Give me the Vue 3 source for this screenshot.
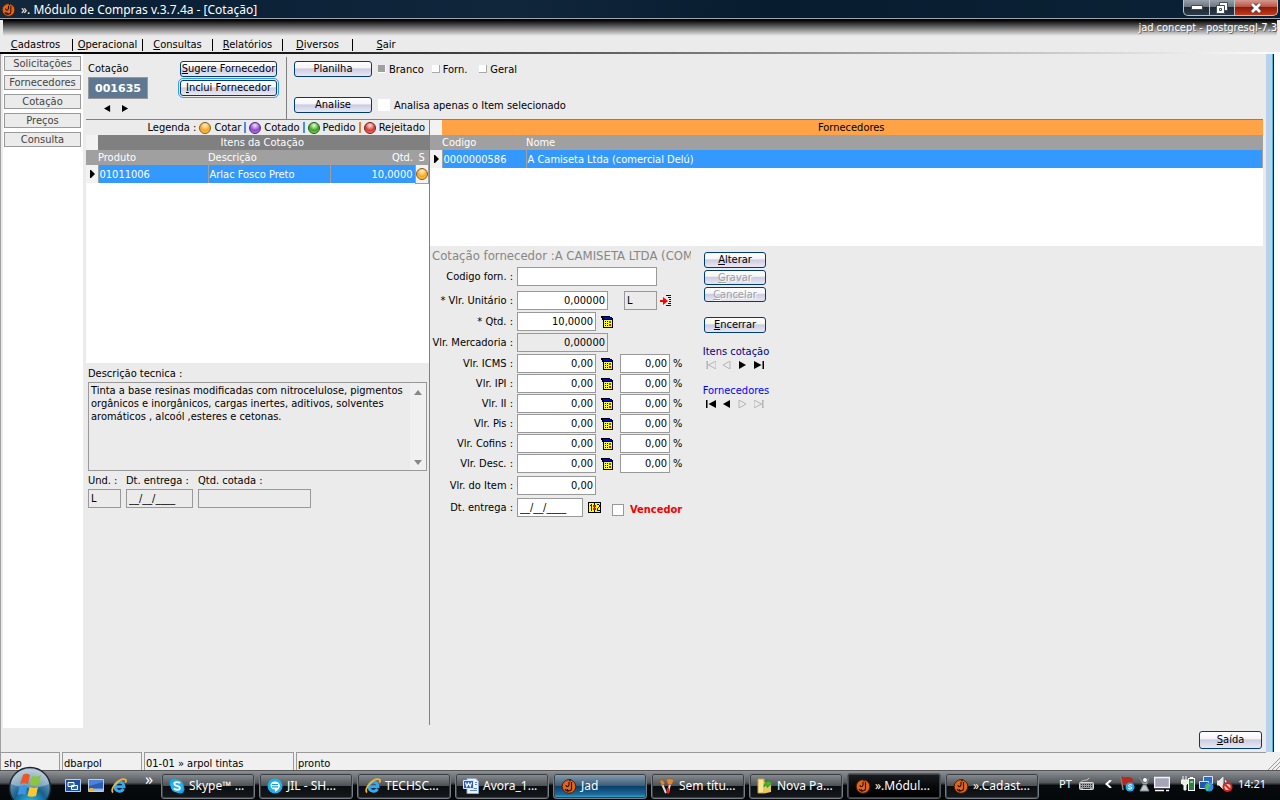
<script setup>
import { ref } from 'vue'

const menus = [
  { text: 'Cadastros', w: 66 },
  { text: 'Operacional', w: 70 },
  { text: 'Consultas', w: 70 },
  { text: 'Relatórios', w: 70 },
  { text: 'Diversos', w: 70 },
  { text: 'Sair', w: 66 }
]
const sections = ['Solicitações', 'Fornecedores', 'Cotação', 'Preços', 'Consulta']
const legend = [
  { text: 'Cotar', ball: 'amber', bar: '' },
  { text: 'Cotado', ball: 'purple', bar: 'blue' },
  { text: 'Pedido', ball: 'green', bar: 'blue' },
  { text: 'Rejeitado', ball: 'red', bar: 'orange' }
]
const taxes = ref([
  { id: 'icms', label: 'Vlr. ICMS :', value: '0,00', pct: '0,00' },
  { id: 'ipi', label: 'Vlr. IPI :', value: '0,00', pct: '0,00' },
  { id: 'ii', label: 'Vlr. II :', value: '0,00', pct: '0,00' },
  { id: 'pis', label: 'Vlr. Pis :', value: '0,00', pct: '0,00' },
  { id: 'cofins', label: 'Vlr. Cofins :', value: '0,00', pct: '0,00' },
  { id: 'desc', label: 'Vlr. Desc. :', value: '0,00', pct: '0,00' }
])
const tasks = [
  { text: 'Skype™ ...', icon: 'skype' },
  { text: 'JIL - SH...', icon: 'chat' },
  { text: 'TECHSC...', icon: 'ie' },
  { text: 'Avora_1...', icon: 'word' },
  { text: 'Jad', icon: 'jad', state: 'flash' },
  { text: 'Sem títu...', icon: 'paint' },
  { text: 'Nova Pa...', icon: 'folder' },
  { text: '».Módul...', icon: 'jad', state: 'active' },
  { text: '».Cadast...', icon: 'jad' }
]
const descricao = ref('Tinta a base resinas modificadas com nitrocelulose, pigmentos orgânicos e inorgânicos, cargas inertes, aditivos, solventes aromáticos , alcoól ,esteres e cetonas.')
const planilha = ref('branco')
const apenasItem = ref(false)
const vencedor = ref(false)
</script>

<template>
  <div class="desktop">
    <svg class="defs" aria-hidden="true">
      <defs>
        <radialGradient id="orb" cx=".5" cy=".9" r=".9">
          <stop offset="0" stop-color="#35c4f0" /><stop offset=".45" stop-color="#15608f" /><stop offset="1" stop-color="#a9bccb" />
        </radialGradient>
        <symbol id="jad" viewBox="0 0 16 16">
          <circle cx="8" cy="8.5" r="6.8" fill="#e0661a" stroke="#4a1c05" />
          <path d="M9 1v2.5M10.5 4v6.5c0 3-4 3-4.5.5M5 7c0 2 2 2.5 3 0V4M4 11c1 2 3 2.5 5 1.5" fill="none" stroke="#2b0f02" stroke-width="1.1" />
        </symbol>
        <symbol id="skype" viewBox="0 0 16 16">
          <circle cx="5" cy="5" r="4.5" fill="#12a5e8" /><circle cx="11" cy="11" r="4.5" fill="#12a5e8" /><circle cx="8" cy="8" r="6.5" fill="#22b0f0" />
          <path d="M11 5.3C10 3.5 5.3 3.700 5.300 5.900c0 2.400 5.600 1.300 5.600 4 0 2.300-4.800 2.500-6 .3" fill="none" stroke="#fff" stroke-width="1.8" />
        </symbol>
        <symbol id="chat" viewBox="0 0 16 16">
          <circle cx="8" cy="8" r="7.5" fill="#1bb0ee" /><path d="M8 3.500c-6 0-6 8 0 8v2.500c7-3.500 6-10.500 0-10.500z" fill="#fff" /><path d="M5 6.500h6M5 8.800h6" stroke="#1b9ddb" stroke-width="1.2" />
        </symbol>
        <symbol id="ie" viewBox="0 0 16 16">
          <path d="M12.500 11c-2 3.500-8.500 3-8.500-2.500 0-6 9-6 9 .3H5" fill="none" stroke="#39a8ee" stroke-width="3" />
          <path d="M2 14.500C-2 11 9-1 14.500 1.500c1 .7.500 2-.2 3.200" fill="none" stroke="#f7b52b" stroke-width="1.7" />
        </symbol>
        <symbol id="word" viewBox="0 0 16 16">
          <path d="M4 .5h9l2.500 3v12H4z" fill="#eef4ff" stroke="#8ca8d8" /><path d="M7 10.500h7M7 12.500h7M12 4.500h2M12 6.500h2" stroke="#5b83c8" />
          <path d="M.5 2.500h10v8H.5z" fill="#2d5fb8" stroke="#dce8ff" /><path d="M2.500 4.500l1.300 4 1.700-3.500 1.700 3.500 1.300-4" fill="none" stroke="#fff" stroke-width="1.2" />
        </symbol>
        <symbol id="paint" viewBox="0 0 16 16">
          <path d="M3 6l4 9M11 6L9 15" stroke="#ddd" stroke-width="2" /><path d="M9 10v5.500" stroke="#d22" stroke-width="2.500" />
          <path d="M.5 3l3-1.500 2.500 4-3 2zM7 1.500L10 .5l5 1-2 5H9z" fill="#d98a38" stroke="#8d4d18" stroke-width=".5" />
        </symbol>
        <symbol id="folder" viewBox="0 0 16 16">
          <path d="M1 1h6v14H1z" fill="#f8e79a" stroke="#c7a43f" /><path d="M7 4h7v10l-7 1.500z" fill="#e8c95c" />
          <path d="M7 9c0-4 2-5 3-5V1.500l5 4-5 4V7C9 7 8 8 7 9z" fill="#3cba2e" stroke="#1d7a18" stroke-width=".6" />
        </symbol>
        <symbol id="calc" viewBox="0 0 12 12">
          <g shape-rendering="crispEdges">
            <path d="M0 0h9v1h2v1h1v10H2V4H1V2H0z" fill="#000" />
            <path d="M3 4h8v7H3z" fill="#ff0" />
            <path d="M2 1h7v1h1v1H3V2H2z" fill="#00f" />
            <path d="M4 5h1v1H4zM6 5h1v1H6zM4 7h1v1H4zM6 7h1v1H6zM4 9h1v1H4zM6 9h1v1H6z" fill="#000" />
            <path d="M8 5h2v2H8z" fill="#008080" /><path d="M8 8h2v2H8z" fill="#f00" />
          </g>
        </symbol>
        <symbol id="prev" viewBox="0 0 10 8"><path d="M8 0v8L1 4z" /></symbol>
        <symbol id="next" viewBox="0 0 10 8"><path d="M1 0v8l7-4z" /></symbol>
        <symbol id="first" viewBox="0 0 10 8"><path d="M0 0h1.500v8H0zM10 0v8L2.500 4z" /></symbol>
        <symbol id="last" viewBox="0 0 10 8"><path d="M8.500 0H10v8H8.500zM0 0v8l7.500-4z" /></symbol>
        <symbol id="row-mark" viewBox="0 0 5 8"><path d="M0 0h1l4 4-4 4H0z" /></symbol>
      </defs>
    </svg>

    <header class="titlebar">
      <svg class="app-icon"><use href="#jad" /></svg>
      <h1>». Módulo de Compras v.3.7.4a - [Cotação]</h1>
      <div class="win-buttons">
        <button type="button" aria-label="Minimizar" class="min"><svg width="12" height="5"><path d="M.5.5h11v4H.5z" fill="#fff" stroke="#444c56" /></svg></button>
        <button type="button" aria-label="Restaurar" class="restore"><svg width="12" height="12"><path d="M3.500.5h8v8h-8z" fill="#fff" stroke="#444c56" /><path d="M.5 3.500h8v8h-8z" fill="#fff" stroke="#444c56" /><path d="M3.500 6.500h2v2h-2z" fill="#fff" stroke="#444c56" /></svg></button>
        <button type="button" aria-label="Fechar" class="close"><svg width="12" height="10"><path d="M2 1l8 8M10 1L2 9" stroke="#4c4c55" stroke-width="4.500" /><path d="M2 1l8 8M10 1L2 9" stroke="#fff" stroke-width="2.600" /></svg></button>
      </div>
    </header>

    <div class="banner"><span>jad concept - postgresql-7.3</span></div>
    <nav class="menubar">
      <button v-for="m in menus" :key="m.text" type="button" :style="{ width: m.w + 'px' }"><u>{{ m.text[0] }}</u>{{ m.text.slice(1) }}</button>
    </nav>

    <div class="body">
      <aside class="sidebar">
        <div class="sections">
          <button v-for="s in sections" :key="s" type="button">{{ s }}</button>
        </div>
      </aside>

      <main class="content">
        <div class="toolbar">
          <div class="cot">
            <label for="cot">Cotação</label>
            <input id="cot" type="text" value="001635" readonly>
            <div class="steps">
              <button type="button" class="nav" aria-label="Cotação anterior"><svg><use href="#prev" /></svg></button>
              <button type="button" class="nav" aria-label="Próxima cotação"><svg><use href="#next" /></svg></button>
            </div>
          </div>
          <div class="forn-actions">
            <button type="button" class="btn"><u>S</u>ugere Fornecedor</button>
            <button type="button" class="btn focused"><u>I</u>nclui Fornecedor</button>
          </div>
          <div class="reports">
            <div class="report-row">
              <button type="button" class="btn">Planilha</button>
              <label class="opt"><input v-model="planilha" type="radio" value="branco">Branco</label>
              <label class="opt"><input v-model="planilha" type="radio" value="forn">Forn.</label>
              <label class="opt geral"><input v-model="planilha" type="radio" value="geral">Geral</label>
            </div>
            <div class="report-row">
              <button type="button" class="btn">Analise</button>
              <label class="only"><input v-model="apenasItem" type="checkbox">Analisa apenas o Item selecionado</label>
            </div>
          </div>
        </div>

        <div class="panes">
          <section class="items">
            <div class="legend">
              <span class="legend-title">Legenda :</span>
              <template v-for="l in legend" :key="l.text">
                <i v-if="l.bar" class="bar" :class="l.bar"></i>
                <span class="entry"><i class="ball" :class="l.ball"></i>{{ l.text }}</span>
              </template>
            </div>
            <div class="items-box">
              <table class="grid">
                <colgroup><col class="c-ind"><col class="c-prod"><col class="c-desc"><col class="c-qtd"><col></colgroup>
                <thead>
                  <tr class="cap dark"><td class="corner"></td><th colspan="4">Itens da Cotação</th></tr>
                  <tr class="head"><td></td><th>Produto</th><th>Descrição</th><th class="right">Qtd.</th><th class="center">S</th></tr>
                </thead>
                <tbody>
                  <tr><td class="ind"><svg><use href="#row-mark" /></svg></td><td>01011006</td><td>Arlac Fosco Preto</td><td class="right">10,0000</td><td class="status"><i class="ball amber"></i></td></tr>
                </tbody>
              </table>
            </div>
            <div class="details">
              <label for="desc-tec">Descrição tecnica :</label>
              <div class="memo">
                <textarea id="desc-tec" v-model="descricao" readonly></textarea>
                <div class="scroll" aria-hidden="true">
                  <svg width="8" height="5"><path d="M0 5l4-5 4 5z" fill="#888" /></svg>
                  <svg width="8" height="5"><path d="M0 0h8L4 5z" fill="#888" /></svg>
                </div>
              </div>
              <div class="mini">
                <div class="w-und"><label for="und">Und. :</label><input id="und" type="text" value="L" readonly></div>
                <div class="w-dt"><label for="dt1">Dt. entrega :</label><input id="dt1" type="text" value="__/__/____" readonly></div>
                <div class="w-qtd"><label for="qc">Qtd. cotada :</label><input id="qc" type="text" readonly></div>
              </div>
            </div>
          </section>

          <section class="supplier">
            <div class="sup-box">
              <table class="grid">
                <colgroup><col class="c-ind"><col class="c-cod"><col></colgroup>
                <thead>
                  <tr class="cap orange"><td class="corner"></td><th colspan="2">Fornecedores</th></tr>
                  <tr class="head"><td></td><th>Codigo</th><th>Nome</th></tr>
                </thead>
                <tbody>
                  <tr><td class="ind"><svg><use href="#row-mark" /></svg></td><td>0000000586</td><td>A Camiseta Ltda (comercial Delú)</td></tr>
                </tbody>
              </table>
            </div>

            <div class="quote">
              <form class="form" @submit.prevent>
                <h2>Cotação fornecedor :A CAMISETA LTDA (COME</h2>
                <div class="row codigo"><label for="cf">Codigo forn. :</label><input id="cf" class="w140" type="text"></div>
                <div class="row"><label for="vu">* Vlr. Unitário :</label><input id="vu" class="w91" type="text" value="0,00000"><input class="unit" type="text" value="L" aria-label="Unidade" readonly>
                  <button type="button" class="icon" aria-label="Aplicar valor"><svg width="12" height="12"><path d="M0 5h3V2l5 4-5 4V7H0z" fill="#f00" /><path d="M6 .5h5M8 2.500h3M9 4.500h2M9 6.500h2M8 8.500h3M6 10.500h5" stroke="#0000a0" /></svg></button></div>
                <div class="row two"><label for="q">* Qtd. :</label><input id="q" class="w79" type="text" value="10,0000"><button type="button" class="icon" aria-label="Calculadora"><svg width="12" height="12"><use href="#calc" /></svg></button></div>
                <div class="row two"><label for="vm">Vlr. Mercadoria :</label><input id="vm" class="w91" type="text" value="0,00000" readonly></div>
                <div class="taxes">
                  <div v-for="t in taxes" :key="t.id" class="row">
                    <label :for="t.id">{{ t.label }}</label><input :id="t.id" v-model="t.value" class="w79" type="text"><button type="button" class="icon" aria-label="Calculadora"><svg width="12" height="12"><use href="#calc" /></svg></button><input v-model="t.pct" class="pct" type="text" :aria-label="t.label + ' %'"><span class="sign">%</span>
                  </div>
                </div>
                <div class="row three"><label for="vi">Vlr. do Item :</label><input id="vi" class="w79" type="text" value="0,00"></div>
                <div class="row three"><label for="dt2">Dt. entrega :</label><input id="dt2" class="w66" type="text" value="__/__/____"><button type="button" class="icon" aria-label="Calendário"><svg width="13" height="11" shape-rendering="crispEdges"><path d="M0 0h13v11H0z" fill="#000" /><path d="M1 1h11v9H1z" fill="#ff0" /><path d="M3 2h1v7H3zM2 3h1v1H2zM9 2h2v1H9zM11 3h1v2h-1zM10 5h1v1h-1zM9 6h1v2H9zM9 8h3v1H9z" fill="#0000c0" /><path d="M6 1h1v9H6z" fill="#000" /><path d="M5 3h3v2H5zM5 6h3v2H5z" fill="#f00" /></svg></button>
                  <label class="winner"><input v-model="vencedor" type="checkbox">Vencedor</label></div>
              </form>

              <div class="actions">
                <button type="button" class="btn"><u>A</u>lterar</button>
                <button type="button" class="btn" disabled><u>G</u>ravar</button>
                <button type="button" class="btn" disabled><u>C</u>ancelar</button>
                <button type="button" class="btn encerrar"><u>E</u>ncerrar</button>
                <p class="navy">Itens cotação</p>
                <div class="navset">
                  <button type="button" class="nav" disabled aria-label="Primeiro item"><svg><use href="#first" /></svg></button>
                  <button type="button" class="nav" disabled aria-label="Item anterior"><svg><use href="#prev" /></svg></button>
                  <button type="button" class="nav" aria-label="Próximo item"><svg><use href="#next" /></svg></button>
                  <button type="button" class="nav" aria-label="Último item"><svg><use href="#last" /></svg></button>
                </div>
                <p class="blue-t">Fornecedores</p>
                <div class="navset">
                  <button type="button" class="nav" aria-label="Primeiro fornecedor"><svg><use href="#first" /></svg></button>
                  <button type="button" class="nav" aria-label="Fornecedor anterior"><svg><use href="#prev" /></svg></button>
                  <button type="button" class="nav" disabled aria-label="Próximo fornecedor"><svg><use href="#next" /></svg></button>
                  <button type="button" class="nav" disabled aria-label="Último fornecedor"><svg><use href="#last" /></svg></button>
                </div>
              </div>
            </div>
          </section>
        </div>
        <div class="exit"><button type="button" class="btn"><u>S</u>aída</button></div>
      </main>
      <div class="edge"></div>
    </div>

    <footer class="statusbar">
      <span class="s1">shp</span><span class="s2">dbarpol</span><span class="s3">01-01 » arpol tintas</span><span class="s4">pronto</span>
      <svg class="grip" width="12" height="12"><path d="M0 12L12 0M4 12l8-8M8 12l4-4" stroke="#999" /></svg>
    </footer>

    <div class="taskbar">
      <button type="button" class="start" aria-label="Iniciar">
        <svg width="44" height="44" viewBox="0 0 44 44"><circle cx="22" cy="22" r="20.500" fill="url(#orb)" stroke="#1c2730" stroke-width="1.500" /><path d="M3 18C5-2 39-2 41 18c-12 5-26 5-38 0z" fill="#fff" opacity=".35" />
          <path d="M15 9c3-2 5-1 7 0l-2 9c-3-1-5-1-8 0z" fill="#e8582a" /><path d="M24 10c3 1 6 1 9-1l-2.500 10c-3 1-5 1-8.500 0z" fill="#8cc63c" /><path d="M11.500 20c3-1 5-1 8 0l-2 9c-3-1-5-1-8 0z" fill="#3d94e0" /><path d="M21.500 21c3 1 6 1 8.500 0l-2 9c-3 1-6 1-8.500 0z" fill="#fbc92d" /></svg>
      </button>
      <div class="quick">
        <button type="button" aria-label="Alternar janelas"><svg width="16" height="14"><path d="M.5.5h15v12H.5z" fill="#1d4f9c" stroke="#b9cfe8" /><path d="M3 3.500h6v4H3zM6.500 6.500h6v4h-6z" fill="#2d68bd" stroke="#fff" /></svg></button>
        <button type="button" aria-label="Mostrar área de trabalho"><svg width="16" height="14"><path d="M.5.5h15v12H.5z" fill="#4a84d6" stroke="#b9cfe8" /><path d="M1 7l14-4v6H1z" fill="#2c5db3" /><path d="M1 10h14v2H1z" fill="#a9b8c8" /><path d="M2 9h3v3H2z" fill="#e8b23a" /></svg></button>
        <button type="button" aria-label="Internet Explorer"><svg width="16" height="16"><use href="#ie" /></svg></button>
      </div>
      <button type="button" class="more" aria-label="Mais">»</button>
      <div class="tasks">
        <button v-for="t in tasks" :key="t.text" type="button" :class="t.state"><svg width="16" height="16"><use :href="'#' + t.icon" /></svg><span>{{ t.text }}</span></button>
      </div>
      <div class="tray">
        <span class="lang">PT</span>
        <svg class="kbd" width="15" height="12"><path d="M2 4C3 1 8 4 10 0" fill="none" stroke="#ccc" /><rect x=".5" y="4.500" width="14" height="7" rx="1" fill="#999" stroke="#ddd" /><path d="M2 6.500h11M2 8.500h11" stroke="#333" stroke-dasharray="1 1" /><path d="M4 10.500h7" stroke="#333" /></svg>
        <svg class="chev" width="7" height="8"><path d="M6 0L1.500 4 6 8" fill="none" stroke="#fff" stroke-width="2" /></svg>
        <svg width="15" height="16"><path d="M1 0l2 14" stroke="#888" stroke-width="1.500" /><path d="M1 0c4 3 7-1 12 3l-1 7C8 7 6 11 3 9z" fill="#b62a1d" /><circle cx="10" cy="11" r="4.500" fill="#25aeea" /><path d="M12 9.500c-1-1.500-4-1-3.500.6.3 1 3.500.6 3.300 2-.2 1.200-3 1.200-3.800 0" fill="none" stroke="#fff" /></svg>
        <svg width="13" height="16"><path d="M1 1l5 6 5-5-2 6H5zM5 9h3l3 6H2z" fill="#c5c9cd" stroke="#7a848e" /><circle cx="7" cy="4" r="2.500" fill="#fff" stroke="#666" /></svg>
        <svg class="pc" width="16" height="16"><path d="M.5 1.500h15v10H.5z" fill="#a5a5b7" stroke="#f2f2fa" stroke-width="1.500" /><path d="M1 14.500h9M12 14.500h3" stroke="#fff" stroke-width="1.500" /></svg>
        <svg width="15" height="16"><path d="M2 0v4M5 0v4M0 4h7v3L5 9v5H3V9L0 7z" fill="#e8f1dc" stroke="#f7f7f7" /><rect x="7.500" y="2.500" width="6" height="12" fill="#26813a" stroke="#fff" /><path d="M9 1.500h3M9 6h3" stroke="#fff" /></svg>
        <svg width="15" height="16"><path d="M4.500.5h9v7h-9z" fill="#2b6bc9" stroke="#d6e6f8" /><path d="M.5 5.500h9v7h-9z" fill="#1f58ae" stroke="#d6e6f8" /><circle cx="10" cy="11" r="4.500" fill="#2d8fe0" /><path d="M8 8c3-1 4 2 2 3s0 3-1 4-4-3-1-7z" fill="#4fc04a" /></svg>
        <svg width="16" height="16"><path d="M0 5h2l4-4v12l-4-4H0zM8 4c2 2 2 4 0 6" fill="#e8e8e8" stroke="#ddd" /><circle cx="10.500" cy="11" r="4" fill="#f6d5d2" stroke="#d4251c" stroke-width="2" /><path d="M8 8.500l5 5" stroke="#d4251c" stroke-width="2" /></svg>
        <time>14:21</time>
      </div>
    </div>
  </div>
</template>

<style>
body { background: #ebebeb; }
</style>

<style scoped>
* { box-sizing: border-box; }
.desktop { min-height: 100vh; display: flex; flex-direction: column; background: #ebebeb; color: #000; font: 11px/13px "DejaVu Sans Condensed", Tahoma, "Noto Sans", sans-serif; }
.defs { position: absolute; width: 0; height: 0; }
button, input, textarea { font: inherit; color: inherit; margin: 0; padding: 0; border-radius: 0; }
button { background: none; border: 0; white-space: nowrap; }
input, textarea { outline: none; min-width: 0; }
h1, h2, p { margin: 0; font-weight: normal; }
svg { display: block; flex: none; }

.titlebar { height: 20px; display: flex; align-items: center; padding-left: 1px; background: linear-gradient(100deg, #14283c 0, #0a2036 12%, #10263b 40%, #081c2f 60%, #0b2236 100%); border-bottom: 1px solid #000; box-shadow: inset 0 -1px #9aa6b0; }
.app-icon { width: 15px; height: 17px; }
.titlebar h1 { margin-left: 5px; font: 12px/18px "Noto Sans", sans-serif; color: #fff; }
.win-buttons { margin: 0 2px 0 auto; height: 20px; display: flex; align-self: flex-start; align-items: flex-start; }
.win-buttons button { height: 16px; display: flex; align-items: center; justify-content: center; border: 1px solid #b9c2ca; border-top: 0; background: linear-gradient(#98a0aa, #6c7580 45%, #1d2935 50%, #2c3947); }
.win-buttons .min { width: 27px; border-radius: 0 0 0 5px; }
.win-buttons .restore { width: 25px; border-left: 0; }
.win-buttons .close { width: 43px; border-left: 0; border-radius: 0 0 5px 0; background: linear-gradient(#d39a8e, #bb5643 45%, #8f1b06 50%, #c33b1b); }

.banner { height: 16px; margin: 0 3px; text-align: right; line-height: 16px; color: #fff; background: linear-gradient(#000, #ebebeb); text-shadow: 1px 1px #666; }
.menubar { height: 18px; display: flex; align-items: center; padding: 4px 0 2px 3px; border-bottom: 2px solid; border-image: linear-gradient(90deg, #000, #111 20%, #fff) 1; }
.menubar button { height: 12px; line-height: 12px; text-align: center; border-right: 1px solid #000; }
.menubar button:last-child { border: 0; }
.menubar button:first-child { width: 70px !important; padding-right: 4px; }

.body { flex: 1; display: flex; border-left: 1px solid #a0a0a0; }
.sidebar { width: 82px; padding: 0 0 24px 2px; display: flex; }
.sections { width: 80px; background: #fff; padding: 2px 2px 0 1px; display: flex; flex-direction: column; gap: 4px; }
.sections button { height: 15px; line-height: 13px; border: 1px solid #999; background: #ebebeb; color: #444; }
.content { flex: 1; min-width: 0; display: flex; flex-direction: column; padding: 0 3px 3px 3px; }
.edge { width: 14px; border-left: 6px solid #b9d1ea; background: linear-gradient(90deg, #2cc4ea 1px, #000 1px, #000 2px, #fff 2px); }

.btn { height: 16px; line-height: 14px; text-align: center; border: 1px solid #003c74; border-radius: 3px; background: linear-gradient(#fff, #f5f5fa 40%, #cdcde0 50%, #e8e8f4); }
.btn:disabled { color: #a0a0a0; text-shadow: 1px 1px #fff; }
.nav { width: 18px; height: 10px; display: flex; align-items: center; justify-content: center; }
.nav svg { width: 10px; height: 8px; }
.nav:disabled svg { fill: #ebebeb; stroke: #b4b4b4; stroke-width: 1; }

.toolbar { height: 66px; display: flex; border-bottom: 1px solid #808080; padding-top: 3px; }
.cot { width: 92px; padding: 5px 0 0 2px; }
.cot label { display: block; }
.cot input { display: block; width: 60px; height: 22px; margin-top: 2px; border: 1px solid #999; background: #5f7891; color: #fff; font: bold 11px/20px "DejaVu Sans", sans-serif; text-align: center; }
.steps { display: flex; padding: 4px 0 0 10px; }
.steps svg { width: 9px; height: 7px; }
.forn-actions { width: 109px; padding: 4px 9px 0 2px; display: flex; flex-direction: column; gap: 3px; border-right: 1px solid #808080; }
.focused { outline: 1px solid #3399ff; outline-offset: 1px; }
.reports { padding: 4px 0 0 7px; display: flex; flex-direction: column; gap: 20px; }
.report-row { display: flex; height: 16px; align-items: center; }
.report-row .btn { width: 78px; margin-right: 6px; }
.opt { display: flex; align-items: center; margin-right: 8px; }
.opt.geral { margin-left: 4px; }
.opt input { appearance: none; width: 8px; height: 8px; margin-right: 3px; background: #fff; border: solid #aaa; border-width: 0 1px 1px 0; }
.opt input:checked { background: #a0a0a0; border-color: #fff; }
.only { display: flex; align-items: center; }
.only input { appearance: none; width: 12px; height: 12px; background: #fff; margin-right: 4px; }
.only input:checked { background: #a0a0a0; }

.panes { flex: 1; display: flex; }
.items { width: 344px; border-right: 1px solid #808080; display: flex; flex-direction: column; }
.legend { height: 15px; display: flex; align-items: center; justify-content: flex-end; padding-right: 4px; gap: 3px; }
.entry { display: flex; align-items: center; gap: 3px; }
.bar { width: 2px; height: 11px; }
.bar.blue { background: #4a90d9; }
.bar.orange { background: #d9863a; }
.ball { display: block; width: 12px; height: 12px; border-radius: 50%; border: 1px solid #555; }
.amber { background: radial-gradient(circle at 50% 25%, #fff3c8, #f6a623 55%, #ffd95e); border-color: #8a5a20; }
.purple { background: radial-gradient(circle at 50% 25%, #f3e4ff, #8d47cc 55%, #c79bf0); border-color: #4d2a78; }
.green { background: radial-gradient(circle at 50% 25%, #e6ffd8, #40a023 55%, #a4ec70); border-color: #1f5a16; }
.red { background: radial-gradient(circle at 50% 25%, #ffe3dc, #d33a34 55%, #ff9b8c); border-color: #7a1a1a; }
.items-box { height: 228px; background: #fff; }
.sup-box { height: 126px; background: #fff; }
.grid { width: 100%; table-layout: fixed; border-collapse: collapse; }
.grid th, .grid td { padding: 0 2px 0 0; font-weight: normal; text-align: left; white-space: nowrap; height: 15px; line-height: 15px; }
.grid .right { text-align: right; }
.grid .center { text-align: center; padding: 0; }
.c-ind { width: 12px; }
.c-prod { width: 110px; }
.c-desc { width: 122px; }
.c-qtd { width: 85px; }
.c-cod { width: 84px; }
.grid .cap th { text-align: center; }
.grid .corner { background: #f2f2f2; }
.dark th { background: #808080; color: #fff; }
.orange th { background: #ffa346; color: #000; }
.head { background: #a0a0a0; color: #fff; }
.grid tbody td { height: 18px; background: #3399ff; color: #fff; padding-left: 1px; border-right: 1px solid #a0a0a0; }
.grid tbody td.ind { background: #f2f2f2; padding: 0 0 0 4px; }
.grid tbody td.status { background: #f2f2f2; padding: 0; border-bottom: 1px solid #a0a0a0; }
.ind svg { width: 5px; height: 8px; }
.details { padding: 4px 2px 0 2px; }
.details label { display: block; }
.memo { height: 89px; margin: 2px 0 3px; border: 1px solid #999; display: flex; }
.memo textarea { flex: 1; border: 0; resize: none; overflow: hidden; background: #ebebeb; padding: 1px 2px; line-height: 13px; }
.scroll { width: 16px; background: #f0f0f0; display: flex; flex-direction: column; justify-content: space-between; align-items: center; padding: 7px 0 5px; }
.mini { display: flex; gap: 5px; }
.mini input { display: block; width: 100%; height: 19px; margin-top: 2px; border: 1px solid #999; background: #ebebeb; padding-left: 2px; }
.w-und { width: 33px; white-space: nowrap; }
.w-dt { width: 67px; white-space: nowrap; }
.w-qtd { width: 113px; white-space: nowrap; }

.supplier { flex: 1; min-width: 0; }
.quote { display: flex; }
.form { width: 261px; }
.form h2 { height: 19px; padding-left: 2px; overflow: hidden; white-space: nowrap; color: #868686; font-size: 13px; line-height: 19px; }
.row { display: flex; align-items: center; height: 19px; white-space: nowrap; }
.row.codigo { margin: 2px 0 5px; }
.row.two { margin-top: 2px; }
.row.three { margin-top: 3px; }
.row > label:first-child { width: 87px; padding-right: 4px; display: flex; justify-content: flex-end; }
.row input[type="text"] { height: 19px; border: 1px solid #999; background: #fff; text-align: right; padding: 0 2px; }
.row input[type="text"]:read-only { background: #ebebeb; }
.w140 { width: 140px; }
.w91 { width: 91px; }
.w79 { width: 79px; }
.row input.w66 { width: 66px; text-align: left; }
.row input.unit { width: 33px; margin-left: 16px; text-align: left; }
.row input.pct { width: 50px; margin-left: 7px; }
.icon { width: 12px; margin-left: 5px; }
.unit + .icon { margin-left: 3px; }
.sign { margin-left: 3px; }
.taxes { margin-top: 2px; display: flex; flex-direction: column; gap: 1px; }
.winner { display: flex; align-items: center; margin-left: 12px; padding-top: 4px; color: #f00000; font-weight: bold; }
.winner input { appearance: none; width: 12px; height: 12px; border: 1px solid #999; background: #fff; margin-right: 6px; }
.winner input:checked { background: #a0a0a0; }
.actions { width: 68px; margin-left: 11px; padding-top: 6px; display: flex; flex-direction: column; gap: 2px; }
.actions .btn { width: 62px; margin-left: 2px; }
.actions .btn:disabled { height: 15px; line-height: 13px; }
.actions .encerrar { margin: 13px 0 10px 2px; }
.actions p { display: flex; justify-content: center; white-space: nowrap; }
.navy { color: #000080; }
.blue-t { color: #00f; }
.navset { display: flex; margin: 0 0 12px 1px; }
.navset .nav { width: 16px; }
.exit { display: flex; justify-content: flex-end; padding-top: 6px; }
.exit .btn { width: 63px; height: 18px; line-height: 16px; margin-right: 1px; }

.statusbar { height: 18px; display: flex; gap: 2px; background: #f0f0f0; }
.statusbar span { border: 1px solid #999; border-width: 1px 1px 0 1px; padding: 3px 0 0 1px; line-height: 15px; white-space: nowrap; }
.statusbar .s1 { width: 60px; padding-left: 3px; }
.statusbar .s2 { width: 80px; }
.statusbar .s3 { width: 150px; }
.statusbar .s4 { flex: 1; border-right: 0; }
.grip { align-self: flex-end; }

.taskbar { height: 30px; display: flex; align-items: center; color: #fff; font: 12px/16px "Noto Sans", sans-serif; border-top: 1px solid #555; background: linear-gradient(#8c9196, #55595e 40%, #070a0d 50%, #05080b); }
.start { width: 44px; height: 34px; margin-left: 8px; align-self: flex-end; overflow: hidden; display: flex; align-items: flex-start; flex: none; }
.quick { display: flex; gap: 7px; align-items: center; margin-left: 13px; }
.more { width: 10px; height: 14px; line-height: 14px; margin: 1px 7px 0 17px; align-self: flex-start; font-size: 16px; }
.tasks { display: flex; gap: 4px; }
.tasks button { width: 94px; height: 26px; display: flex; align-items: center; gap: 4px; padding-left: 7px; border: 1px solid #777d83; border-radius: 3px; box-shadow: inset 0 0 0 1px #3b4045; background: linear-gradient(#8b8f94, #4e5358 48%, #0b0e11 52%, #14181c); text-align: left; }
.tasks .flash { background: linear-gradient(#8ba1b5, #3d5c77 48%, #0c3e6b 52%, #1c6a9b 85%, #3db5df); }
.tasks .active { background: linear-gradient(#1b1d20, #08090b 50%, #000); border-color: #565b60; }
.tray { flex: 1; display: flex; align-items: center; justify-content: flex-end; gap: 3px; padding: 0 14px 3px 0; font-size: 11px; }
.tray .lang { margin-right: 4px; }
.tray .chev { margin: 0 5px 0 8px; }
.tray .pc { margin-right: 8px; }
.tray time { margin-left: 2px; }
</style>
